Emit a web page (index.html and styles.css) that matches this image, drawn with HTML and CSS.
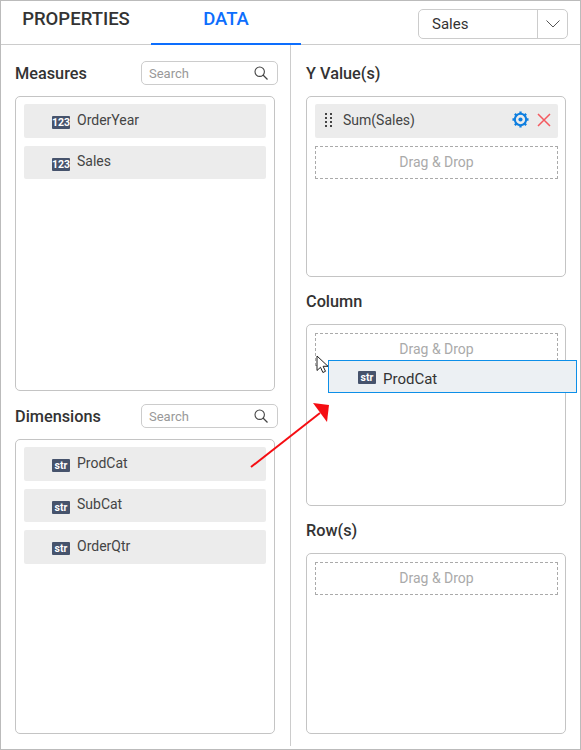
FILE: index.html
```html
<!DOCTYPE html>
<html lang="en">
<head>
  <title>Data Panel</title>
  <meta charset="UTF-8">
  <link rel="stylesheet" href="styles.css">
</head>
<body>
  <div class="panel">
    <div class="header">
      <div class="tab">PROPERTIES</div>
      <div class="tab tab-active">DATA</div>
      <div class="dropdown">
        <span class="dropdown-text">Sales</span>
        <span class="dropdown-btn">
          <svg width="14" height="8" viewBox="0 0 14 8"><path d="M0.5 0.5l6.500 6.500 6.500-6.500" fill="none" stroke="#555" stroke-width="1"/></svg>
        </span>
      </div>
    </div>

    <div class="columns">
      <div class="col col-left">
        <div class="title-row">
          <span class="title">Measures</span>
          <div class="search">
            <span>Search</span>
            <svg width="14" height="14" viewBox="0 0 14 14"><circle cx="5.700" cy="5.700" r="4.700" fill="none" stroke="#444" stroke-width="1.100"/><path d="M9 9l4.500 4.500" stroke="#444" stroke-width="1.300"/></svg>
          </div>
        </div>
        <div class="box box-left">
          <div class="item"><span class="badge">123</span>OrderYear</div>
          <div class="item"><span class="badge">123</span>Sales</div>
        </div>

        <div class="title-row title-row-next">
          <span class="title">Dimensions</span>
          <div class="search">
            <span>Search</span>
            <svg width="14" height="14" viewBox="0 0 14 14"><circle cx="5.700" cy="5.700" r="4.700" fill="none" stroke="#444" stroke-width="1.100"/><path d="M9 9l4.500 4.500" stroke="#444" stroke-width="1.300"/></svg>
          </div>
        </div>
        <div class="box box-left">
          <div class="item"><span class="badge">str</span>ProdCat</div>
          <div class="item"><span class="badge">str</span>SubCat</div>
          <div class="item"><span class="badge">str</span>OrderQtr</div>
        </div>
      </div>

      <div class="col col-right">
        <div class="title-row"><span class="title">Y Value(s)</span></div>
        <div class="box box-right">
          <div class="item item-value">
            <svg class="grip" width="7" height="14" viewBox="0 0 7 14" fill="#444"><rect x="0" y="0" width="2" height="2"/><rect x="5" y="0" width="2" height="2"/><rect x="0" y="4" width="2" height="2"/><rect x="5" y="4" width="2" height="2"/><rect x="0" y="8" width="2" height="2"/><rect x="5" y="8" width="2" height="2"/><rect x="0" y="12" width="2" height="2"/><rect x="5" y="12" width="2" height="2"/></svg>
            <span class="item-name">Sum(Sales)</span>
            <svg class="gear" viewBox="0 0 18 18"><circle cx="9" cy="9" r="6" fill="none" stroke="#0f7fe0" stroke-width="2.200"/><circle cx="9" cy="9" r="2.200" fill="#0f7fe0"/><path d="M9 0.500v3M9 14.500v3M0.500 9h3M14.500 9h3M3 3l2.100 2.100M12.900 12.900l2.100 2.100M15 3l-2.100 2.100M5.100 12.900l-2.100 2.100" stroke="#0f7fe0" stroke-width="2.400"/></svg>
            <svg class="remove" width="14" height="14" viewBox="0 0 14 14"><path d="M1 1l12 12M13 1L1 13" stroke="#f4595f" stroke-width="1.500"/></svg>
          </div>
          <div class="drop">Drag &amp; Drop</div>
        </div>

        <div class="title-row title-row-small"><span class="title">Column</span></div>
        <div class="box box-right box-next">
          <div class="drop">Drag &amp; Drop</div>
        </div>

        <div class="title-row title-row-small"><span class="title">Row(s)</span></div>
        <div class="box box-right box-next">
          <div class="drop">Drag &amp; Drop</div>
        </div>
      </div>
    </div>

    <!-- things being dragged, they sit over the panel -->
    <div class="drag-item"><span class="badge badge-drag">str</span><span class="drag-name">ProdCat</span></div>
    <svg class="arrow" width="90" height="80" viewBox="0 0 90 80">
      <path d="M1 72L70 18" stroke="#f50d12" stroke-width="2" fill="none"/>
      <path d="M79 10L63 8L77 27Z" fill="#f50d12"/>
    </svg>
    <svg class="cursor" width="14" height="20" viewBox="0 0 14 20">
      <path d="M1 1v14.500l3.500-3.200 2.400 5.200 2.600-1.200-2.400-5h4.900z" fill="#fff" stroke="#222" stroke-width="1"/>
    </svg>
  </div>
</body>
</html>
```

FILE: styles.css
```css
* {
  box-sizing: border-box;
}

body {
  margin: 0;
  font-family: Roboto, "Liberation Sans", sans-serif;
  color: #333;
  background-color: #fff;
}

.panel {
  position: relative;
  width: 581px;
  height: 750px;
  border: 1px solid #bbb;
  overflow: hidden;
}

.header {
  display: flex;
  height: 44px;
  border-bottom: 1px solid #ccc;
}

.tab {
  width: 150px;
  height: 44px;
  line-height: 37px;
  text-align: center;
  font-size: 18.5px;
  font-weight: 500;
  color: #333;
}

.tab-active {
  color: #0d6efd;
  border-bottom: 2px solid #0d6efd;
}

.dropdown {
  display: flex;
  width: 150px;
  height: 30px;
  margin: 8px 0 0 117px;
  border: 1px solid #ccc;
  border-radius: 5px;
  font-size: 15px;
}

.dropdown-text {
  flex: 1;
  padding-left: 13px;
  line-height: 28px;
}

.dropdown-btn {
  display: flex;
  align-items: center;
  justify-content: center;
  width: 30px;
  border-left: 1px solid #ccc;
}

.columns {
  display: flex;
  height: 701px;
}

.col {
  padding-top: 16px;
}

.col-left {
  width: 290px;
  padding-left: 14px;
  border-right: 1px solid #ccc;
}

.col-right {
  padding-left: 15px;
}

.title-row {
  display: flex;
  align-items: center;
  justify-content: space-between;
  height: 24px;
  margin-bottom: 11px;
}

.title-row-next {
  margin-top: 13px;
}

.title-row-small {
  margin-top: 12.5px;
  margin-bottom: 10.5px;
}

.title {
  font-size: 16.3px;
  font-weight: 500;
  color: #333;
}

.search {
  display: flex;
  align-items: center;
  justify-content: space-between;
  width: 137px;
  height: 24px;
  margin-right: 12px;
  padding: 0 9px 0 7px;
  border: 1px solid #ccc;
  border-radius: 5px;
  font-size: 13px;
  color: #999;
}

.box {
  border: 1px solid #c4c4c4;
  border-radius: 5px;
  padding: 7px 8px;
}

.box-left {
  width: 260px;
  height: 295px;
}

.box-right {
  width: 260px;
  height: 181.4px;
  padding-right: 7px;
}

.box-next {
  padding-top: 8px;
}

.item {
  display: flex;
  align-items: center;
  height: 33.5px;
  margin-bottom: 8px;
  padding-left: 28px;
  padding-bottom: 1.6px;
  background-color: #ececec;
  border-radius: 2px;
  font-size: 14px;
  color: #444;
}

.item-value {
  padding-left: 10px;
  padding-right: 7px;
}

.item-name {
  flex: 1;
  margin-left: 11px;
}

.grip {
  flex: none;
}

.gear {
  width: 17px;
  height: 17px;
  margin-right: 8px;
}

.badge {
  flex: none;
  width: 18px;
  height: 13px;
  margin: 6px 7px 0 0;
  background-color: #46536c;
  border-radius: 1px;
  color: #fff;
  font-size: 10.5px;
  font-weight: 700;
  line-height: 13px;
  text-align: center;
}

.drop {
  height: 33px;
  border: 1px dashed #aaa;
  line-height: 31px;
  text-align: center;
  font-size: 14px;
  color: #aaa;
}

.drag-item {
  position: absolute;
  left: 327px;
  top: 359px;
  display: flex;
  align-items: center;
  width: 249px;
  height: 33px;
  padding-left: 29px;
  background-color: #ecf0f3;
  border: 1px solid #0d8fe8;
  font-size: 15px;
  color: #333;
}

.badge-drag {
  margin: 2px 7px 0 0;
}

.drag-name {
  padding-top: 4px;
}

.arrow {
  position: absolute;
  left: 249px;
  top: 394px;
}

.cursor {
  position: absolute;
  left: 315px;
  top: 354px;
}
```
